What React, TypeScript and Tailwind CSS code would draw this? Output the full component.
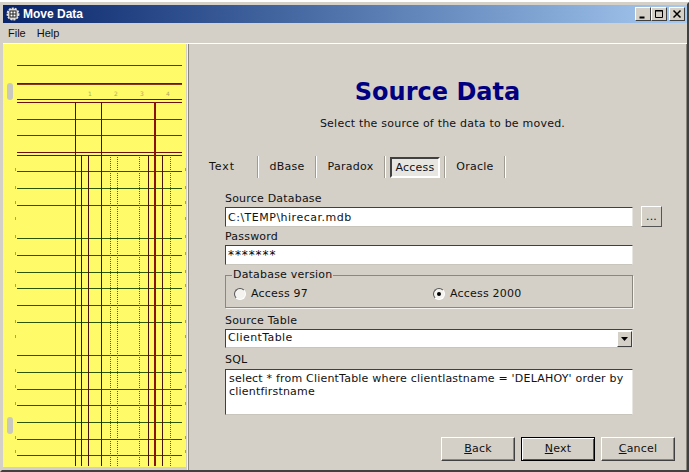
const greens = [65, 119, 135, 171, 188, 205, 238, 255, 272, 288, 305, 322, 355, 372, 389, 405, 422, 439, 455];
const reds = [83, 99, 102, 152, 155];
const solid = [81, 88, 148, 162];
const dotted = [110, 117, 139, 170];
const marks = [168, 186, 201, 217, 235, 252, 270, 284, 320, 335, 369, 385, 402, 436, 450];

function Ledger() {
  return (
    <svg width="183" height="423" viewBox="0 44 183 423" className="block">
      <defs>
        <pattern id="dither" width="2" height="2" patternUnits="userSpaceOnUse">
          <rect x="0" y="0" width="2" height="2" fill="#fefa68" />
          <rect x="0" y="0" width="1" height="1" fill="#f8f5a0" />
          <rect x="1" y="1" width="1" height="1" fill="#f8f5a0" />
        </pattern>
      </defs>
      <rect x="0" y="44" width="183" height="423" fill="url(#dither)" />
      {greens.map((y) => (
        <line key={y} x1="14" x2="179" y1={y + 0.5} y2={y + 0.5} stroke="#2c5500" />
      ))}
      {reds.map((y) => (
        <line key={y} x1="14" x2="179" y1={y + 0.5} y2={y + 0.5} stroke="#6e0f0a" />
      ))}
      <line x1="14" x2="179" y1="84.5" y2="84.5" stroke="#8a3a20" />
      <line x1="72.5" x2="72.5" y1="102" y2="466" stroke="#4a1206" />
      <line x1="98.5" x2="98.5" y1="102" y2="466" stroke="#4a1206" />
      <line x1="152" x2="152" y1="102" y2="466" stroke="#8b1010" strokeWidth="2" />
      {solid.map((x) => (
        <line key={x} x1={x - 2.5} x2={x - 2.5} y1="155" y2="466" stroke="#4a1206" />
      ))}
      {dotted.map((x) => (
        <line key={x} x1={x - 2.5} x2={x - 2.5} y1="157" y2="466" stroke="#5f6000" strokeDasharray="1 1" />
      ))}
      {[85, 111, 137, 163].map((x, i) => (
        <text key={x} x={x} y="96" fontSize="6" fill="#b0aa60" fontFamily="DejaVu Sans, sans-serif">
          {i + 1}
        </text>
      ))}
      {marks.map((y) => (
        <g key={y} fill="#a5a560">
          <rect x="12" y={y} width="1" height="3" />
          <rect x="182" y={y} width="1" height="3" />
        </g>
      ))}
      <rect x="4" y="83" width="6" height="17" rx="3" fill="#c8c8c0" />
      <rect x="4" y="417" width="6" height="17" rx="3" fill="#c8c8c0" />
    </svg>
  );
}

function TitleButton({ children }: { children: React.ReactNode }) {
  return (
    <div className="flex h-[14px] w-4 items-center justify-center border border-t-white border-l-white border-r-[#404040] border-b-[#404040] bg-[#d4d0c8]">
      <svg width="10" height="10" viewBox="0 0 10 10" stroke="black" fill="none">
        {children}
      </svg>
    </div>
  );
}

function Field({ label, value, valueClass }: { label: string; value: string; valueClass: string }) {
  return (
    <div>
      <div className="h-[17px] leading-[18px]">{label}</div>
      <input
        readOnly
        value={value}
        className={`block h-5 w-[408px] border border-t-[#404040] border-l-[#404040] border-r-[#e8e6e0] border-b-[#c8c5bc] bg-white px-[2px] outline-none ${valueClass}`}
      />
    </div>
  );
}

function Radio({ checked, label, className }: { checked?: boolean; label: string; className?: string }) {
  return (
    <div className={`flex items-center gap-[5px] ${className ?? ""}`}>
      <div className="flex h-3 w-3 items-center justify-center rounded-full border border-t-[#555] border-l-[#555] border-r-white border-b-white bg-[#f4f3ef]">
        {checked && <div className="h-1 w-1 rounded-full bg-black" />}
      </div>
      <span>{label}</span>
    </div>
  );
}

function Tab({ label, active, width }: { label: string; active?: boolean; width: string }) {
  return (
    <div className={`flex h-[22px] items-center justify-center ${width}`}>
      <span
        className={
          active
            ? "flex h-[21px] w-[50px] items-center justify-center border-2 border-t-[#404040] border-l-[#404040] border-r-white border-b-white bg-[#e8e6e0] pt-[2px]"
            : ""
        }
      >
        {label}
      </span>
    </div>
  );
}

function Sep() {
  return <div className="h-[22px] w-[2px] border-r border-r-white bg-[#a09c94]" />;
}

function PushButton({ letter, rest, isDefault }: { letter: string; rest: string; isDefault?: boolean }) {
  return (
    <button
      className={`h-[24px] w-[74px] bg-[#d4d0c8] ${
        isDefault
          ? "border border-black shadow-[inset_1px_1px_0_#fff,inset_-1px_-1px_0_#555]"
          : "border border-t-white border-l-white border-r-[#404040] border-b-[#404040] shadow-[inset_-1px_-1px_0_#8a877f]"
      }`}
    >
      <span className="underline">{letter}</span>
      {rest}
    </button>
  );
}

export default function App() {
  return (
    <div className="flex h-[472px] w-[689px] flex-col overflow-hidden bg-[#d4d0c8] font-['DejaVu_Sans',sans-serif] text-[11px] text-[#111]">
      <div className="h-[2px] bg-white" />
      <div className="flex min-h-0 flex-1 flex-col border-2 border-t-[#d4d0c8] border-l-[#d4d0c8] border-r-[#404040] border-b-[#404040] pl-[1px]">
        {/* title bar */}
        <div className="mt-[1px] flex h-[18px] items-center bg-gradient-to-r from-[#0a246a] to-[#a6caf0] pr-[2px] pl-[3px]">
          <svg width="14" height="14" viewBox="0 0 14 14" className="mr-[3px]">
            <circle cx="7" cy="7" r="5.5" fill="#d8d4cc" stroke="#e8e4dc" strokeDasharray="2 1" strokeWidth="2" />
            <rect x="4" y="4" width="6" height="6" fill="#fff" stroke="#222" />
            <path d="M7 4v6M4 7h6" stroke="#222" />
          </svg>
          <span className="flex-1 font-['Liberation_Sans',sans-serif] text-[12px] font-bold text-white">Move Data</span>
          <TitleButton>
            <path d="M1.5 8.5h5" strokeWidth="2" />
          </TitleButton>
          <TitleButton>
            <path d="M1.5 1.5h7v7h-7zM1 2h8" />
          </TitleButton>
          <div className="ml-[2px]">
            <TitleButton>
              <path d="M1.5 1.5l7 7M8.5 1.5l-7 7" strokeWidth="1.5" />
            </TitleButton>
          </div>
        </div>
        {/* menu */}
        <div className="flex h-[20px] items-center gap-[11px] pl-[5px] font-['Liberation_Sans',sans-serif] text-[11px]">
          <span>File</span>
          <span>Help</span>
        </div>
        <div className="h-[1px] bg-white" />
        {/* body */}
        <div className="flex min-h-0 flex-1">
          <div className="mr-[1px] overflow-hidden">
            <Ledger />
          </div>
          <div className="w-[1px] bg-[#f4f3ef]" />
          <div className="w-[1px] bg-[#8a877f]" />
          <div className="flex min-w-0 flex-1 flex-col border-r border-r-[#8a877f]">
            <h1 className="mt-[32px] h-[32px] text-center text-[24px] leading-[32px] font-bold text-[#000080]">
              Source Data
            </h1>
            <p className="mt-[8px] ml-[10px] h-[16px] text-center leading-[16px] tracking-[0.22px]">
              Select the source of the data to be moved.
            </p>
            <div className="mt-[24px] ml-[9px] flex items-center tracking-[0.25px]">
              <div className="tracking-[1px]">
                <Tab label="Text" width="w-[48px]" />
              </div>
              <div className="w-[11px]" />
              <Sep />
              <Tab label="dBase" width="w-[56px]" />
              <Sep />
              <Tab label="Paradox" width="w-[67px]" />
              <Sep />
              <Tab label="Access" active width="w-[58px]" />
              <Sep />
              <Tab label="Oracle" width="w-[58px]" />
              <Sep />
            </div>
            <div className="mt-[12px] ml-[36px] flex flex-col tracking-[0.2px]">
              <div className="relative">
                <Field label="Source Database" value="C:\TEMP\hirecar.mdb" valueClass="tracking-[0.5px]" />
                <button className="absolute top-[16px] left-[416px] h-[21px] w-[21px] border border-t-white border-l-white border-r-[#555] border-b-[#555] bg-[#d4d0c8] leading-[14px]">
                  ...
                </button>
              </div>
              <div className="h-[1px]" />
              <Field label="Password" value="*******" valueClass="text-[12px] tracking-[0.9px] text-black" />
              <fieldset className="mt-[4px] h-[39px] w-[408px] border border-[#8a877f] px-[6px] shadow-[1px_1px_0_#f4f3ef]">
                <legend className="px-[1px] leading-[12px]">Database version</legend>
                <div className="mt-[5px] flex">
                  <Radio label="Access 97" className="ml-[2px] w-[199px]" />
                  <Radio checked label="Access 2000" />
                </div>
              </fieldset>
              <div className="mt-[4px] h-[17px] leading-[18px]">Source Table</div>
              <div className="flex h-[19px] w-[408px] items-center justify-between border border-t-[#404040] border-l-[#404040] border-r-[#e8e6e0] border-b-[#c8c5bc] bg-white pl-[2px]">
                <span className="tracking-[0.4px]">ClientTable</span>
                <div className="flex h-[16px] w-[15px] items-center justify-center border border-t-white border-l-white border-r-[#404040] border-b-[#404040] bg-[#d4d0c8]">
                  <svg width="7" height="4" viewBox="0 0 7 4">
                    <path d="M0 0h7L3.5 4z" fill="black" />
                  </svg>
                </div>
              </div>
              <div className="mt-[4px] h-[17px] leading-[16px]">SQL</div>
              <textarea
                readOnly
                value="select * from ClientTable where clientlastname = 'DELAHOY' order by clientfirstname"
                className="block h-[46px] w-[408px] resize-none overflow-hidden border border-t-[#404040] border-l-[#404040] border-r-[#e8e6e0] border-b-[#c8c5bc] bg-white px-[3px] pt-[2px] leading-[13px] outline-none"
              />
            </div>
            <div className="mt-[22px] ml-[252px] flex gap-[6px] tracking-[0.2px]">
              <PushButton letter="B" rest="ack" />
              <PushButton letter="N" rest="ext" isDefault />
              <PushButton letter="C" rest="ancel" />
            </div>
          </div>
        </div>
      </div>
    </div>
  );
}
